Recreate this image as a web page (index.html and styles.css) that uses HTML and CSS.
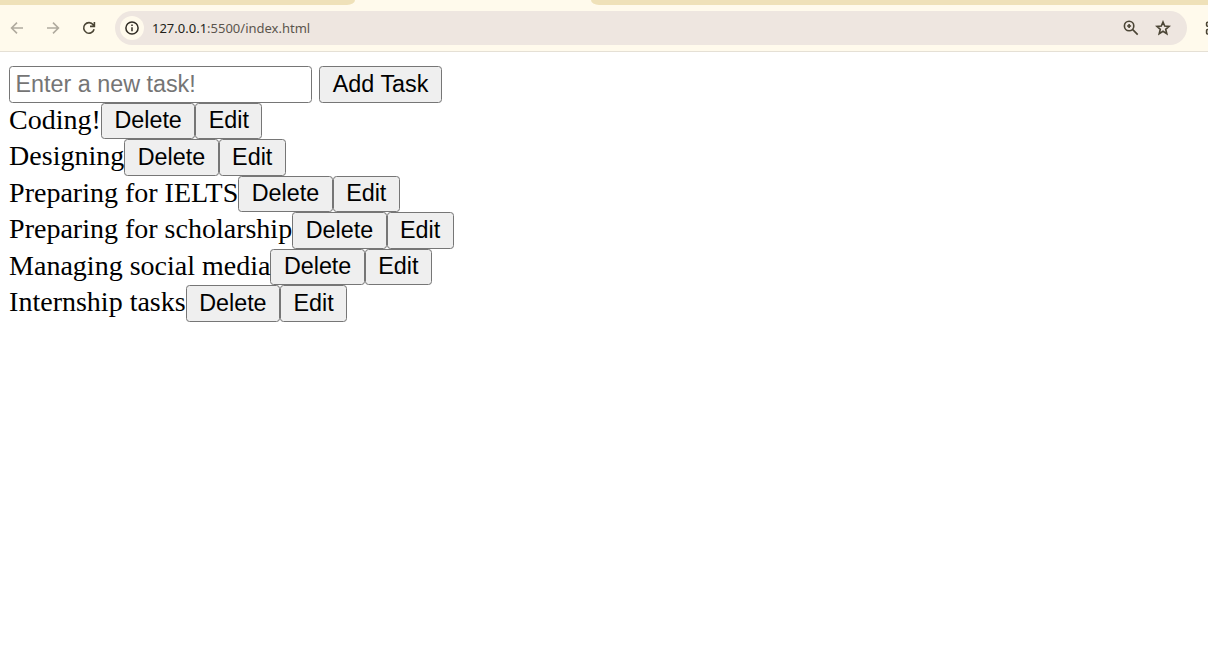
FILE: index.html
```html
<!DOCTYPE html>
<html lang="en">
<head>
<meta charset="utf-8">
<title>To-do list</title>
<link rel="stylesheet" href="styles.css">
</head>
<body>
<header class="browser">
  <div class="tabstrip">
    <div class="tab-left"></div>
    <div class="tab-right"></div>
  </div>
  <div class="toolbar">
    <nav class="nav">
      <svg class="faded" width="14" height="14" viewBox="0 0 14 14"><path d="M13 7H2M7 1.6L1.6 7L7 12.4"/></svg>
      <svg class="faded" width="14" height="14" viewBox="0 0 14 14"><path d="M1 7H12M7 1.6L12.4 7L7 12.4"/></svg>
      <svg width="14" height="14" viewBox="0 0 14 14"><path d="M12.1 8.3A5.3 5.3 0 1 1 11.2 3.7L12.2 5M12.4 1V5.4H8"/></svg>
    </nav>
    <div class="address">
      <span class="info"><svg width="14" height="14" viewBox="0 0 14 14"><circle cx="7" cy="7" r="6.1"/><path d="M7 6.2V10.3M7 3.6V5"/></svg></span>
      <span class="url"><span class="host">127.0.0.1</span>:5500/index.html</span>
      <svg class="magnifier" width="16" height="16" viewBox="0 0 16 16"><circle cx="6.1" cy="6" r="4.7"/><path d="M9.5 9.4L14.7 14.6M6.1 4V8M4.1 6H8.1"/></svg>
      <svg class="star" width="16" height="16" viewBox="0 0 16 16"><path d="M8 2L9.7 6.1L14.1 6.4L10.7 9.3L11.8 13.7L8 11.3L4.2 13.7L5.3 9.3L1.9 6.4L6.3 6.1Z"/></svg>
    </div>
    <svg class="extensions" width="4" height="16" viewBox="0 0 4 16"><path d="M5 2.2H3.6Q2.6 2.2 2.6 3.2V5.3Q2.6 6.3 3.6 6.3H5M5 9.5H3.6Q2.6 9.5 2.6 10.5V13Q2.6 14 3.6 14H5"/></svg>
  </div>
</header>
<main class="page">
  <div class="row entry"><input class="field" type="text" placeholder="Enter a new task!"><button class="btn add">Add Task</button></div>
  <div class="row"><span>Coding!</span><button class="btn delete">Delete</button><button class="btn edit">Edit</button></div>
  <div class="row"><span>Designing</span><button class="btn delete">Delete</button><button class="btn edit">Edit</button></div>
  <div class="row"><span>Preparing for IELTS</span><button class="btn delete">Delete</button><button class="btn edit">Edit</button></div>
  <div class="row"><span>Preparing for scholarship</span><button class="btn delete">Delete</button><button class="btn edit">Edit</button></div>
  <div class="row"><span>Managing social media</span><button class="btn delete">Delete</button><button class="btn edit">Edit</button></div>
  <div class="row"><span>Internship tasks</span><button class="btn delete">Delete</button><button class="btn edit">Edit</button></div>
</main>
</body>
</html>
```

FILE: styles.css
```css
* { box-sizing: border-box; }
body { margin: 0; background: #fff; overflow: hidden; }
.browser { height: 52px; background: #fffaec; border-bottom: 1px solid #e5e0d5; }
.browser svg { display: block; flex: none; fill: none; stroke: #4b4535; stroke-width: 1.6; }
.tabstrip { display: flex; justify-content: space-between; height: 5px; }
.tab-left, .tab-right { background: #efe1b9; }
.tab-left { width: 355px; border-bottom-right-radius: 8px 5px; }
.tab-right { width: 617px; border-bottom-left-radius: 8px 5px; }
.toolbar { display: flex; align-items: center; height: 46px; padding-left: 10px; }
.nav { display: flex; gap: 22px; width: 105px; }
.browser .faded { stroke: #b0aa9e; }
.address { display: flex; align-items: center; width: 1072px; height: 34px; padding: 0 16px 0 5px; border-radius: 17px; background: #eee6e0; }
.info { display: flex; align-items: center; justify-content: center; width: 24px; height: 24px; border-radius: 50%; background: #fffaec; }
.info svg { stroke: #302c24; stroke-width: 1.5; }
.url { margin-left: 8px; font: 13px/20px "Noto Sans", sans-serif; color: #5b554d; white-space: nowrap; }
.host { color: #211e19; }
.magnifier { margin-left: auto; }
.star { margin-left: 16px; }
.extensions { margin-left: auto; }
.page { padding: 14px 9px 0 9.1px; font: 28px/36px "Liberation Serif", serif; color: #000; }
.row { display: flex; align-items: center; height: 36.5px; white-space: nowrap; }
.row span { position: relative; top: -1px; }
.field, .btn { height: 36.5px; margin: 0; border: 1px solid #767676; border-radius: 3.5px; font: 23.333px/27px "Liberation Sans", sans-serif; }
.field { width: 303px; padding: 2px 5.4px; background: #fff; }
.field::placeholder { color: #757575; opacity: 1; }
.btn { padding: 1.5px 0; background: #efefef; color: #000; }
.add { width: 123px; margin-left: 7px; }
.delete { width: 94.5px; }
.edit { width: 67px; }
```
